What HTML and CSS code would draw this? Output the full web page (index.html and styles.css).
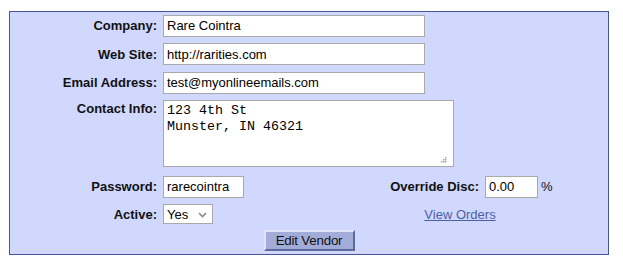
FILE: index.html
```html
<!DOCTYPE html>
<html lang="en">
<head>
    <meta charset="UTF-8">
    <title>Edit Vendor</title>
    <link rel="stylesheet" href="styles.css">
</head>
<body>
    <div class="panel">
        <form class="vendor-form" onsubmit="return false">
            <label class="field-label" for="company">Company:</label>
            <input class="text-input wide" type="text" id="company" value="Rare Cointra">

            <label class="field-label" for="website">Web Site:</label>
            <input class="text-input wide" type="text" id="website" value="http://rarities.com">

            <label class="field-label" for="email">Email Address:</label>
            <input class="text-input wide" type="text" id="email" value="test@myonlineemails.com">

            <label class="field-label top" for="contact">Contact Info:</label>
            <span class="notes-wrap">
                <textarea class="notes" id="contact">123 4th St
Munster, IN 46321</textarea>
                <svg class="grip" width="7" height="7" viewBox="0 0 7 7">
                    <rect x="5" y="0" width="1.5" height="1.5" fill="#a8a8a8"/>
                    <rect x="3" y="2" width="1.5" height="1.5" fill="#a8a8a8"/>
                    <rect x="5" y="2" width="1.5" height="1.5" fill="#a8a8a8"/>
                    <rect x="1" y="4" width="1.5" height="1.5" fill="#a8a8a8"/>
                    <rect x="3" y="4" width="1.5" height="1.5" fill="#a8a8a8"/>
                    <rect x="5" y="4" width="1.5" height="1.5" fill="#a8a8a8"/>
                </svg>
            </span>

            <label class="field-label" for="password">Password:</label>
            <input class="text-input short" type="text" id="password" value="rarecointra">
            <label class="field-label" for="disc">Override Disc:</label>
            <span class="disc-cell"><input class="text-input disc-input" type="text" id="disc" value="0.00"><span class="pct">%</span></span>

            <label class="field-label" for="active">Active:</label>
            <span class="select-wrap">
                <select class="select" id="active">
                    <option>Yes</option>
                    <option>No</option>
                </select>
                <svg class="chevron" width="9" height="6" viewBox="0 0 9 6">
                    <path d="M1 1 L4.5 4.5 L8 1" fill="none" stroke="#8a8a8a" stroke-width="1.6"/>
                </svg>
            </span>
            <a class="orders-link" href="#">View Orders</a>
        </form>
        <div class="actions">
            <button class="edit-btn" type="button">Edit Vendor</button>
        </div>
    </div>
</body>
</html>
```

FILE: styles.css
```css
body {
    margin: 0;
    padding: 11px 0 0 9px;
    background: #fff;
    font-family: "Liberation Sans", Arial, sans-serif;
    font-size: 13px;
    color: #111;
}
.panel {
    width: 600px;
    box-sizing: border-box;
    background: #d0d8fe;
    border: 1px solid #44559b;
    padding: 2.5px 0 3px 0;
}
.vendor-form {
    display: grid;
    grid-template-columns: 147px 200px 110px 66px;
    grid-template-rows: 22px 22px 22px 69px 22px 20px;
    column-gap: 6px;
    row-gap: 6.5px;
    margin: 0;
}
.field-label {
    font-weight: bold;
    text-align: right;
    align-self: center;
    white-space: nowrap;
}
.field-label.top {
    align-self: start;
    padding-top: 1px;
}
.text-input {
    height: 22px;
    box-sizing: border-box;
    border: 1px solid #a9a9a9;
    background: #fff;
    padding: 0 3px;
    margin: 0;
    font-family: "Liberation Sans", Arial, sans-serif;
    font-size: 13px;
    color: #000;
    outline: none;
}
.wide {
    grid-column: 2 / 5;
    width: 262px;
}
.short {
    width: 81px;
}
.notes-wrap {
    grid-column: 2 / 5;
    position: relative;
    width: 291px;
    height: 67px;
}
.notes {
    display: block;
    width: 291px;
    height: 67px;
    box-sizing: border-box;
    border: 1px solid #a9a9a9;
    padding: 2px 3px;
    margin: 0;
    resize: none;
    font-family: "Liberation Mono", "Courier New", monospace;
    font-size: 13.33px;
    line-height: 15.5px;
    color: #000;
    outline: none;
}
.grip {
    position: absolute;
    right: 7px;
    bottom: 3px;
}
.disc-cell {
    display: flex;
    align-items: center;
    white-space: nowrap;
}
.disc-input {
    width: 53px;
}
.pct {
    margin-left: 3px;
}
.select-wrap {
    position: relative;
    width: 50px;
    height: 20px;
}
.select {
    appearance: none;
    -webkit-appearance: none;
    width: 50px;
    height: 20px;
    box-sizing: border-box;
    border: 1px solid #a9a9a9;
    border-radius: 0;
    background: #fff;
    padding: 0 0 0 3px;
    margin: 0;
    font-family: "Liberation Sans", Arial, sans-serif;
    font-size: 13px;
    color: #000;
    outline: none;
}
.chevron {
    position: absolute;
    right: 6px;
    top: 8px;
    pointer-events: none;
}
.orders-link {
    grid-column: 3 / 5;
    justify-self: center;
    align-self: center;
    color: #4e5ea6;
    text-decoration: underline;
}
.actions {
    text-align: center;
    margin-top: 6px;
    font-size: 0;
}
.edit-btn {
    width: 91px;
    height: 21px;
    box-sizing: border-box;
    padding: 0;
    background: #a2acd8;
    border: 2px solid;
    border-color: #dfe3f4 #5f6a9c #5f6a9c #dfe3f4;
    font-family: "Liberation Sans", Arial, sans-serif;
    font-size: 13.33px;
    letter-spacing: -0.2px;
    color: #111;
    cursor: pointer;
}
```
